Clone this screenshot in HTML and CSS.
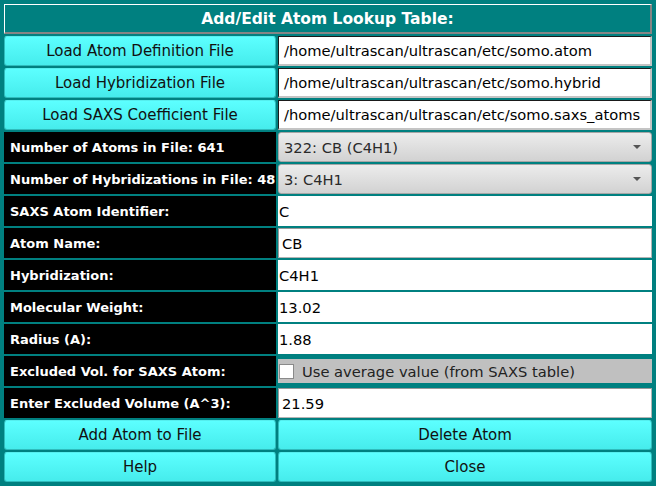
FILE: index.html
```html
<!DOCTYPE html>
<html>
<head>
<meta charset="utf-8">
<link rel="stylesheet" href="styles.css">
</head>
<body>
<div class="panel">
  <div class="title">Add/Edit Atom Lookup Table:</div>

  <div class="btn">Load Atom Definition File</div>
  <div class="edit edit-file">/home/ultrascan/ultrascan/etc/somo.atom</div>

  <div class="btn">Load Hybridization File</div>
  <div class="edit edit-file">/home/ultrascan/ultrascan/etc/somo.hybrid</div>

  <div class="btn">Load SAXS Coefficient File</div>
  <div class="edit edit-file">/home/ultrascan/ultrascan/etc/somo.saxs_atoms</div>

  <div class="label">Number of Atoms in File: 641</div>
  <div class="combo"><span>322: CB (C4H1)</span><span class="arrow"></span></div>

  <div class="label">Number of Hybridizations in File: 48</div>
  <div class="combo"><span>3: C4H1</span><span class="arrow"></span></div>

  <div class="label">SAXS Atom Identifier:</div>
  <div class="edit edit-flat">C</div>

  <div class="label">Atom Name:</div>
  <div class="edit edit-framed">CB</div>

  <div class="label">Hybridization:</div>
  <div class="edit edit-flat">C4H1</div>

  <div class="label">Molecular Weight:</div>
  <div class="edit edit-flat">13.02</div>

  <div class="label">Radius (A):</div>
  <div class="edit edit-flat">1.88</div>

  <div class="label">Excluded Vol. for SAXS Atom:</div>
  <div class="check-cell">
    <div class="check"><span class="box"></span><span class="check-text">Use average value (from SAXS table)</span></div>
  </div>

  <div class="label">Enter Excluded Volume (A^3):</div>
  <div class="edit edit-framed">21.59</div>

  <div class="btn">Add Atom to File</div>
  <div class="btn">Delete Atom</div>

  <div class="btn">Help</div>
  <div class="btn">Close</div>
</div>
</body>
</html>
```

FILE: styles.css
```css
html, body {
  margin: 0;
  padding: 0;
}

body {
  background: #008080;
  font-family: "DejaVu Sans", sans-serif;
  width: 656px;
  height: 486px;
  overflow: hidden;
}

.panel {
  display: grid;
  grid-template-columns: 272px 374px;
  grid-auto-rows: 30px;
  gap: 2px;
  padding: 4px;
}

.title {
  grid-column: 1 / span 2;
  box-sizing: border-box;
  border-top: 1px solid #ffffff;
  border-left: 1px solid #ffffff;
  border-right: 2px solid #858585;
  border-bottom: 2px solid #858585;
  color: #ffffff;
  font-weight: bold;
  font-size: 15.5px;
  display: flex;
  align-items: center;
  justify-content: center;
  padding-top: 1px;
}

.btn {
  box-sizing: border-box;
  background: linear-gradient(#5cffff, #46ecec);
  border: 1px solid #2fbcbc;
  border-top-color: #55eeee;
  border-radius: 3px;
  color: #111;
  font-size: 15px;
  display: flex;
  align-items: center;
  justify-content: center;
  white-space: nowrap;
}

.label {
  background: #000;
  color: #fff;
  font-weight: bold;
  font-size: 13px;
  display: flex;
  align-items: center;
  padding-left: 6px;
  padding-top: 1px;
  white-space: nowrap;
  overflow: hidden;
}

.edit {
  box-sizing: border-box;
  background: #fff;
  color: #000;
  font-size: 14.7px;
  display: flex;
  align-items: center;
  white-space: nowrap;
  overflow: hidden;
}

.edit-file {
  border-top: 1px solid #1a1a1a;
  border-left: 1px solid #1a1a1a;
  border-right: 2px solid #c4c4c4;
  border-bottom: 2px solid #c4c4c4;
  padding-left: 5px;
}

.edit-flat {
  padding-left: 1px;
}

.edit-framed {
  border: 1px solid #b4b4b4;
  border-top-color: #9a9a9a;
  border-left-color: #9a9a9a;
  padding-left: 3px;
}

.combo {
  box-sizing: border-box;
  background: linear-gradient(#ececec, #d2d2d2);
  border: 1px solid #a6a6a6;
  border-radius: 3px;
  color: #2a2a2a;
  font-size: 14.7px;
  display: flex;
  align-items: center;
  justify-content: space-between;
  padding: 0 10px 0 5px;
}

.arrow {
  width: 0;
  height: 0;
  border-left: 4px solid transparent;
  border-right: 4px solid transparent;
  border-top: 4px solid #555;
}

.check-cell {
  display: flex;
  align-items: center;
}

.check {
  flex: 1;
  height: 24px;
  background: #c0c0c0;
  display: flex;
  align-items: center;
  padding-left: 1px;
}

.box {
  width: 13px;
  height: 13px;
  background: #fff;
  border: 1px solid #8a8a8a;
}

.check-text {
  margin-left: 8px;
  color: #222;
  font-size: 14.7px;
}
```
